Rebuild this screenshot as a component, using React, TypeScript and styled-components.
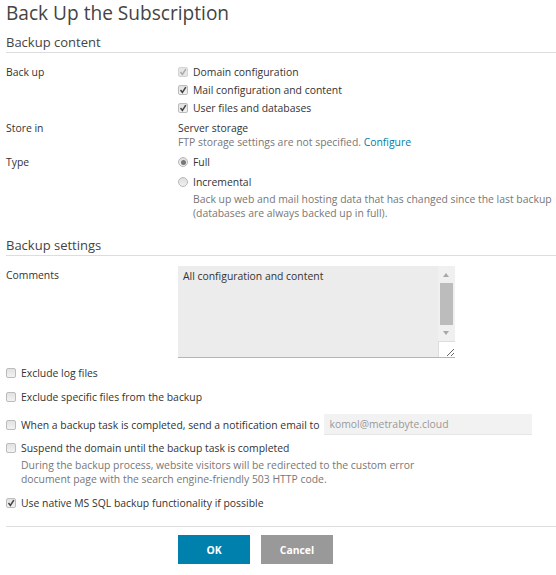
import React from 'react';
import styled, { createGlobalStyle } from 'styled-components';

const GlobalStyle = createGlobalStyle`
html, body {
    margin: 0;
    padding: 0;
    background: #fff;
}
body {
    font-family: "Open Sans", sans-serif;
    font-size: 10.4px;
    line-height: 14px;
    color: #333;
}
`;

const Page = styled.div`
width: 556px;
height: 575px;
overflow: hidden;
padding-left: 6px;
box-sizing: border-box;
`;

const Title = styled.h1`
margin: 0;
height: 27px;
font-size: 19.1px;
line-height: 26px;
font-weight: 400;
color: #444;
`;

const Section = styled.h2<{ $top: number }>`
margin: ${p => p.$top}px 0 0;
height: 16px;
padding-bottom: 3px;
border-bottom: 1px solid #ddd;
font-size: 13px;
line-height: 18px;
font-weight: 400;
color: #444;
`;

const FormRow = styled.div<{ $top: number }>`
display: grid;
grid-template-columns: 172px 1fr;
margin-top: ${p => p.$top}px;
`;

const Label = styled.div`
line-height: 14px;
`;

const Fields = styled.div`
display: flex;
flex-direction: column;
`;

const Option = styled.label<{ $top?: number }>`
display: flex;
align-items: center;
gap: 5px;
height: 14px;
margin-top: ${p => p.$top || 0}px;
white-space: nowrap;
`;

const Box = styled.span<{ $disabled?: boolean }>`
display: block;
flex: none;
width: 8px;
height: 8px;
border: 1px solid ${p => (p.$disabled ? '#d4d4d4' : '#bcbcbc')};
border-radius: 2px;
background: ${p => (p.$disabled ? '#e6e6e6' : 'linear-gradient(#e2e2e2, #f2f2f2)')};
position: relative;
`;

const Tick = styled.svg`
position: absolute;
left: 0;
top: 0;
width: 8px;
height: 8px;
`;

const Round = styled.span`
display: flex;
align-items: center;
justify-content: center;
flex: none;
width: 8px;
height: 8px;
border: 1px solid #b8b8b8;
border-radius: 50%;
background: linear-gradient(#dedede, #f0f0f0);
`;

const Dot = styled.span`
width: 5px;
height: 5px;
border-radius: 50%;
background: #777;
`;

const Hint = styled.div<{ $top?: number; $left?: number }>`
margin-top: ${p => p.$top || 0}px;
margin-left: ${p => p.$left || 0}px;
color: #777;
white-space: nowrap;
`;

const Link = styled.a`
color: #007ba8;
text-decoration: none;
`;

const CommentBox = styled.div`
position: relative;
width: 277px;
height: 92px;
margin-top: -2px;
box-sizing: border-box;
background: #ececec;
border-bottom: 1px solid #a9b8c2;
padding: 3px 5px;
color: #333;
`;

const ScrollTrack = styled.div`
position: absolute;
right: 0;
top: 0;
width: 17px;
height: 75px;
background: #f0f0f0;
`;

const Arrow = styled.span<{ $up?: boolean }>`
position: absolute;
left: 5px;
${p => (p.$up ? 'top: 7px;' : 'bottom: 6px;')}
width: 0;
height: 0;
border-left: 3.5px solid transparent;
border-right: 3.5px solid transparent;
${p => (p.$up ? 'border-bottom: 4px solid #a8a8a8;' : 'border-top: 4px solid #a8a8a8;')}
`;

const Thumb = styled.div`
position: absolute;
left: 2px;
top: 17px;
width: 13px;
height: 42px;
background: #bcbcbc;
`;

const Grip = styled.div`
position: absolute;
right: 0;
bottom: 0;
width: 17px;
height: 16px;
box-sizing: border-box;
background: #fff;
border-left: 1px solid #ddd;
border-top: 1px solid #ddd;
`;

const GripLines = styled.svg`
position: absolute;
right: 0;
bottom: 0;
width: 9px;
height: 9px;
`;

const Stack = styled.div`
display: flex;
flex-direction: column;
`;

const EmailRow = styled.div`
display: flex;
align-items: center;
height: 21px;
margin-top: 10px;
`;

const EmailInput = styled.div`
width: 208px;
height: 21px;
margin-left: 5px;
padding: 0 5px;
box-sizing: border-box;
background: #f2f2f2;
border-bottom: 1px solid #e6e6e6;
color: #999;
line-height: 20px;
white-space: nowrap;
`;

const Footer = styled.div`
display: flex;
gap: 11px;
margin-top: 16px;
padding-top: 8px;
padding-left: 172px;
border-top: 1px solid #ddd;
`;

const Action = styled.button<{ $primary?: boolean }>`
width: 72px;
height: 29px;
border: 0;
padding: 0;
background: ${p => (p.$primary ? '#0080ad' : '#999')};
color: #fff;
font-family: inherit;
font-size: 10.4px;
font-weight: 700;
`;

const Check = ({ on, disabled }: { on?: boolean; disabled?: boolean }) => (
    <Box $disabled={disabled}>
        {on &&
            <Tick viewBox="0 0 8 8">
                <path d="M1.5 4 L3.4 6.4 L6.8 1.2" fill="none" stroke={disabled ? '#aaa' : '#444'} strokeWidth="1.5" />
            </Tick>}
    </Box>
);

const App = () => {
    return (
        <Page>
            <GlobalStyle />
            <Title>Back Up the Subscription</Title>
            <Section $top={6}>Backup content</Section>

            <FormRow $top={12}>
                <Label>Back up</Label>
                <Fields>
                    <Option><Check on disabled />Domain configuration</Option>
                    <Option $top={4}><Check on />Mail configuration and content</Option>
                    <Option $top={4}><Check on />User files and databases</Option>
                </Fields>
            </FormRow>

            <FormRow $top={6}>
                <Label>Store in</Label>
                <Fields>
                    <div>Server storage</div>
                    <Hint>FTP storage settings are not specified. <Link href="#">Configure</Link></Hint>
                </Fields>
            </FormRow>

            <FormRow $top={6}>
                <Label>Type</Label>
                <Fields>
                    <Option><Round><Dot /></Round>Full</Option>
                    <Option $top={6}><Round />Incremental</Option>
                    <Hint $top={3} $left={15}>
                        Back up web and mail hosting data that has changed since the last backup<br />
                        (databases are always backed up in full).
                    </Hint>
                </Fields>
            </FormRow>

            <Section $top={16}>Backup settings</Section>

            <FormRow $top={12}>
                <Label>Comments</Label>
                <CommentBox>
                    All configuration and content
                    <ScrollTrack>
                        <Arrow $up />
                        <Thumb />
                        <Arrow />
                    </ScrollTrack>
                    <Grip>
                        <GripLines viewBox="0 0 9 9">
                            <path d="M1 8 L8 1 M5 8 L8 5" stroke="#666" strokeWidth="1" />
                        </GripLines>
                    </Grip>
                </CommentBox>
            </FormRow>

            <Stack>
                <Option $top={8}><Check />Exclude log files</Option>
                <Option $top={10}><Check />Exclude specific files from the backup</Option>
                <EmailRow>
                    <Option><Check />When a backup task is completed, send a notification email to</Option>
                    <EmailInput>komol@metrabyte.cloud</EmailInput>
                </EmailRow>
                <Option $top={6}><Check />Suspend the domain until the backup task is completed</Option>
                <Hint $top={3} $left={15}>
                    During the backup process, website visitors will be redirected to the custom error<br />
                    document page with the search engine-friendly 503 HTTP code.
                </Hint>
                <Option $top={10}><Check on />Use native MS SQL backup functionality if possible</Option>
            </Stack>

            <Footer>
                <Action $primary>OK</Action>
                <Action>Cancel</Action>
            </Footer>
        </Page>
    );
};

export default App;
